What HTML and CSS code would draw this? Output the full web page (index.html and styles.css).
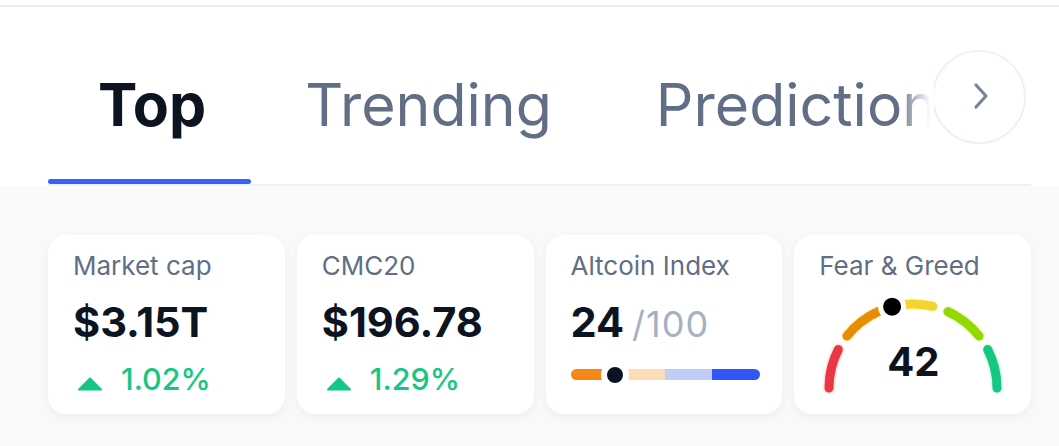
FILE: index.html
```html
<!DOCTYPE html>
<html lang="en">
<head>
<meta charset="utf-8">
<title>Market overview</title>
<link rel="stylesheet" href="styles.css">
</head>
<body>
<div class="topline"></div>
<div class="tabbar">
  <div class="tabs">
    <div class="tab active">Top</div>
    <div class="tab">Trending</div>
    <div class="tab">Predictions</div>
  </div>
  <button class="next" aria-label="Next">
    <svg width="18" height="28" viewBox="0 0 18 28"><path d="M4 3 L14 14 L4 25" fill="none" stroke="#7a8599" stroke-width="3.2" stroke-linecap="round" stroke-linejoin="round"/></svg>
  </button>
</div>
<section class="stats">
  <div class="card">
    <div class="title">Market cap</div>
    <div class="value">$3.15T</div>
    <div class="change">
      <svg class="tri" width="26" height="14" viewBox="0 0 26 14"><path d="M13 1.5 L24 12.5 L2 12.5 Z" fill="#16c784" stroke="#16c784" stroke-width="2" stroke-linejoin="round"/></svg>
      <span>1.02%</span>
    </div>
  </div>
  <div class="card">
    <div class="title">CMC20</div>
    <div class="value">$196.78</div>
    <div class="change">
      <svg class="tri" width="26" height="14" viewBox="0 0 26 14"><path d="M13 1.5 L24 12.5 L2 12.5 Z" fill="#16c784" stroke="#16c784" stroke-width="2" stroke-linejoin="round"/></svg>
      <span>1.29%</span>
    </div>
  </div>
  <div class="card">
    <div class="title">Altcoin Index</div>
    <div class="value">24<span class="den">/100</span></div>
    <div class="slider">
      <span class="seg s1"></span><span class="seg s2"></span><span class="seg s3"></span><span class="seg s4"></span>
      <span class="knob" style="left: 23.5%"></span>
    </div>
  </div>
  <div class="card">
    <div class="title">Fear &amp; Greed</div>
    <div class="gauge">
      <svg width="200" height="104" viewBox="0 0 200 104">
        <defs>
          <filter id="glow" x="-20%" y="-20%" width="140%" height="140%">
            <feGaussianBlur in="SourceGraphic" stdDeviation="1.6" result="b"/>
            <feComponentTransfer in="b" result="bf"><feFuncA type="linear" slope="0.45"/></feComponentTransfer>
            <feMerge><feMergeNode in="bf"/><feMergeNode in="SourceGraphic"/></feMerge>
          </filter>
        </defs>
        <g fill="none" stroke-width="9" stroke-linecap="round" filter="url(#glow)">
          <path d="M16 92 A84 84 0 0 1 25.29 53.6" stroke="#ea3943"/>
          <path d="M33.98 40.05 A84 84 0 0 1 65.03 15.63" stroke="#ea8c00"/>
          <path d="M80.25 10.35 A84 84 0 0 1 119.75 10.35" stroke="#f3d42f"/>
          <path d="M134.97 15.63 A84 84 0 0 1 166.02 40.05" stroke="#93d900"/>
          <path d="M174.71 53.6 A84 84 0 0 1 184 92" stroke="#16c784"/>
        </g>
        <circle cx="79.11" cy="10.64" r="11.5" fill="#000" stroke="#fff" stroke-width="5"/>
      </svg>
      <div class="gauge-num">42</div>
    </div>
  </div>
</section>
</body>
</html>
```

FILE: styles.css
```css
* { box-sizing: border-box; }

html, body {
  margin: 0;
  padding: 0;
}

body {
  height: 100vh;
  display: flex;
  flex-direction: column;
  background: #fff;
  font-family: Inter, "Liberation Sans", sans-serif;
  color: #0d1421;
  overflow: hidden;
}

.topline {
  margin-top: 5px;
  height: 2px;
  background: #eceef1;
  flex: none;
}

.tabbar {
  position: relative;
  margin: 0 28px 0 48px;
  border-bottom: 2px solid #eff1f4;
  flex: none;
}

.tabs {
  display: flex;
  gap: 4px;
  overflow: hidden;
  white-space: nowrap;
}

.tab {
  position: relative;
  flex: none;
  padding: 61.5px 50px 43.5px;
  font-size: 59px;
  line-height: 72px;
  font-weight: 400;
  color: #616e85;
}

.tab.active {
  font-weight: 700;
  color: #0d1421;
  padding-right: 45px;
}

.tab.active::after {
  content: "";
  position: absolute;
  left: 0;
  right: 0;
  bottom: 0;
  height: 5px;
  border-radius: 3px;
  background: #3861fb;
}

.next {
  position: absolute;
  top: 43px;
  right: 5px;
  width: 94px;
  height: 94px;
  padding: 0;
  border: 2px solid #eff0f2;
  border-radius: 50%;
  background: #fff;
  display: flex;
  align-items: center;
  justify-content: center;
  cursor: pointer;
}

.next::before {
  content: "";
  position: absolute;
  right: 100%;
  top: 0;
  bottom: 0;
  width: 36px;
  background: linear-gradient(to right, rgba(255,255,255,0), #fff 90%);
}

.next svg {
  margin-left: 4px;
  margin-top: -2px;
}

.stats {
  flex: 1;
  background: linear-gradient(to bottom, #fbfbfc, #f8f9fa 60px);
  padding: 49px 28px 0 48px;
  display: grid;
  grid-template-columns: repeat(4, 1fr);
  gap: 12px;
  align-content: start;
}

.card {
  height: 179px;
  background: #fff;
  border-radius: 18px;
  padding: 16px 0 0 25px;
  box-shadow: 0 3px 10px rgba(13, 20, 33, 0.05);
}

.title {
  font-size: 26px;
  line-height: 30px;
  color: #616e85;
  white-space: nowrap;
}

.value {
  margin-top: 17px;
  font-size: 41.5px;
  line-height: 48px;
  font-weight: 700;
  color: #0d1421;
  white-space: nowrap;
}

.den {
  margin-left: 8px;
  font-size: 36px;
  font-weight: 400;
  letter-spacing: 1px;
  color: #a6b0c3;
}

.change {
  margin-top: 13px;
  display: flex;
  align-items: center;
  gap: 18px;
  font-size: 30.5px;
  line-height: 40px;
  font-weight: 500;
  color: #16c784;
  padding-left: 4px;
}

.tri {
  margin-top: 9px;
  flex: none;
}

.slider {
  position: relative;
  margin-top: 21px;
  width: 189px;
  height: 11px;
  display: flex;
  border-radius: 6px;
  overflow: visible;
}

.seg { flex: 1; }
.s1 { background: #f68819; border-radius: 6px 0 0 6px; }
.s2 { background: #fddcb8; }
.s3 { background: #c0cbf6; }
.s4 { background: #3156f5; border-radius: 0 6px 6px 0; }

.knob {
  position: absolute;
  top: 50%;
  width: 28px;
  height: 28px;
  margin: -14px 0 0 -14px;
  border-radius: 50%;
  background: #0d1421;
  border: 6px solid #fff;
}

.gauge {
  margin: 15px 0 0 -6px;
  display: grid;
  width: 200px;
}

.gauge svg,
.gauge-num {
  grid-area: 1 / 1;
}

.gauge svg { display: block; }

.gauge-num {
  justify-self: center;
  align-self: start;
  margin-top: 42px;
  font-size: 40px;
  line-height: 48px;
  font-weight: 700;
  color: #0d1421;
}
```
